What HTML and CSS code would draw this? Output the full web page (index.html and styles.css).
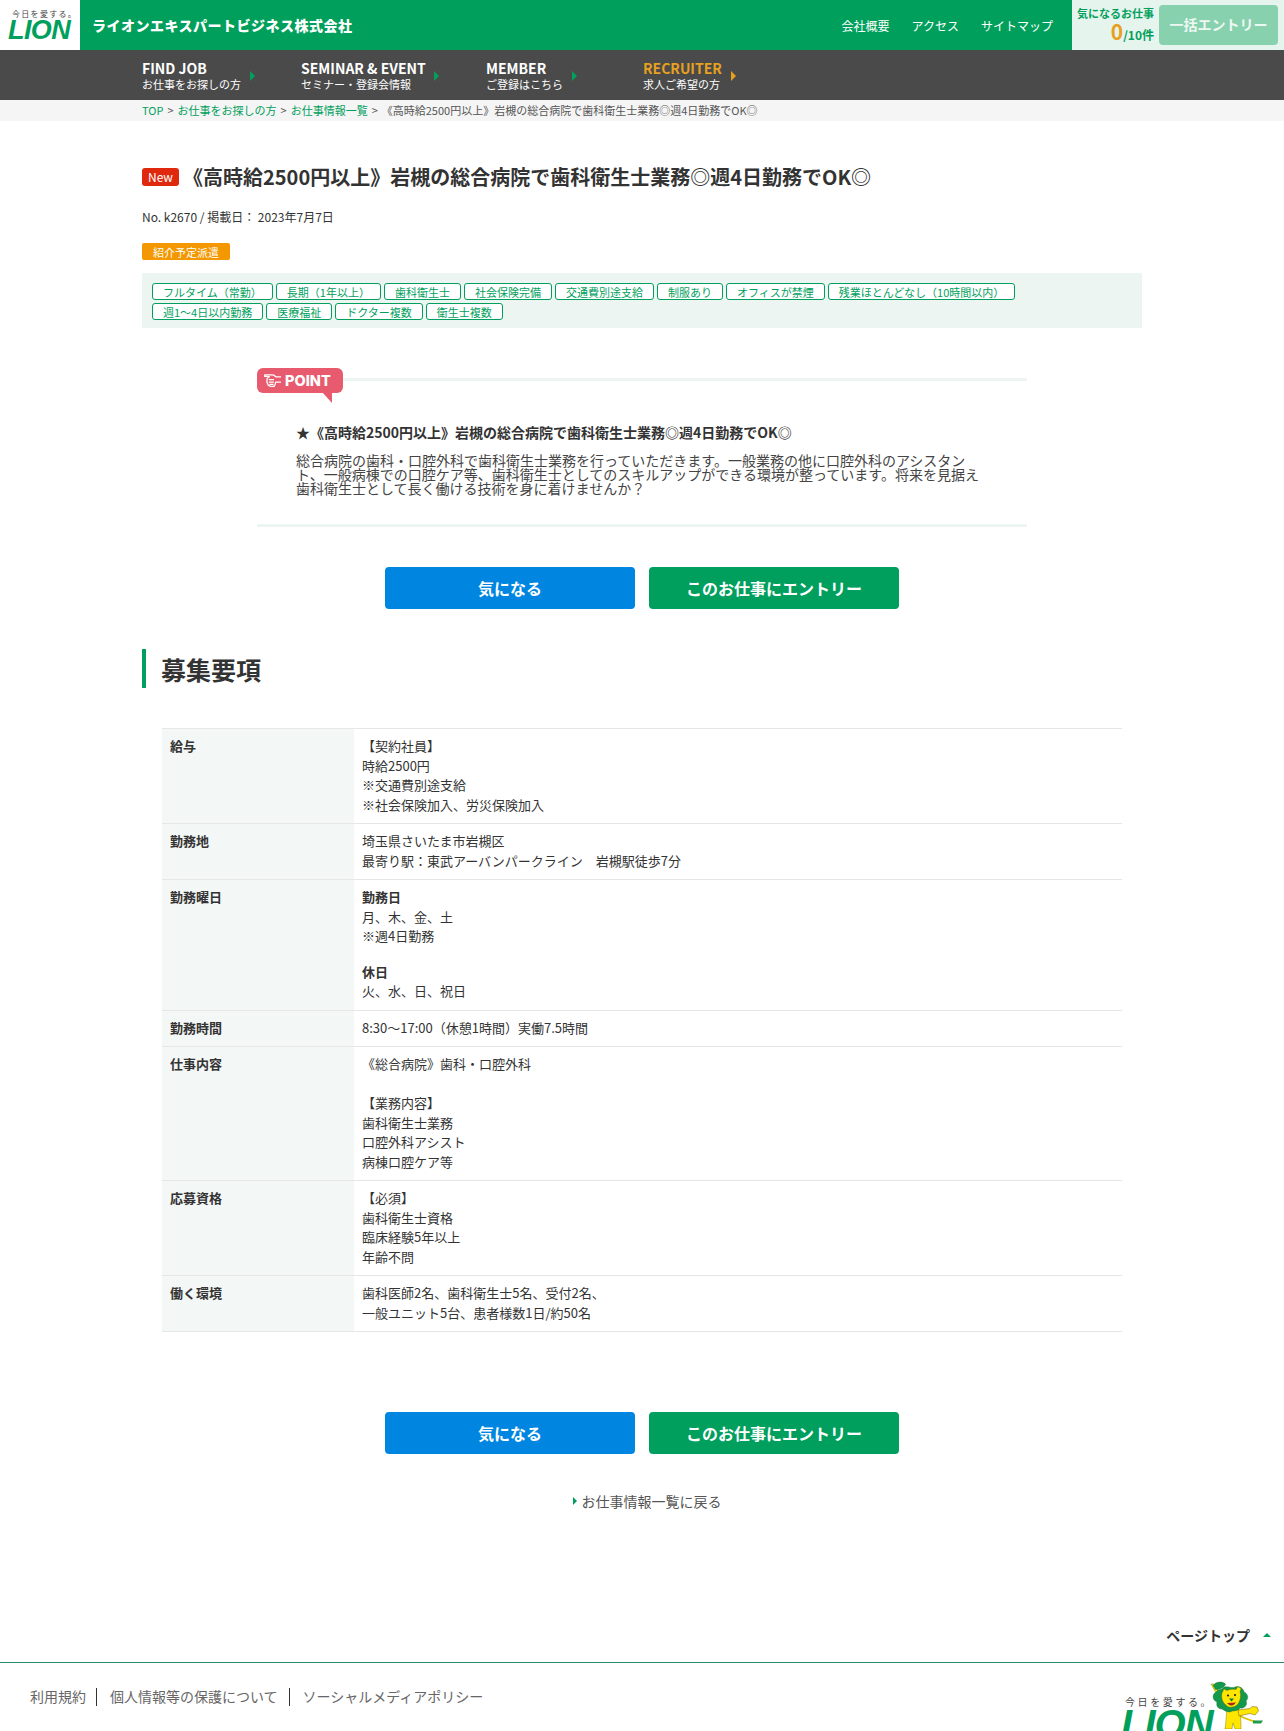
FILE: index.html
```html
<!DOCTYPE html>
<html lang="ja">
<head>
<meta charset="utf-8">
<title>お仕事情報</title>
<link rel="stylesheet" href="styles.css">
</head>
<body>
<header class="top">
  <a class="logo">
    <span class="logo-tag">今日を愛する。</span>
    <span class="logo-lion">LION</span>
  </a>
  <div class="company">ライオンエキスパートビジネス株式会社</div>
  <nav class="util">
    <a>会社概要</a><a>アクセス</a><a>サイトマップ</a>
  </nav>
  <div class="fav">
    <div class="fav-count">
      <div class="fav-label">気になるお仕事</div>
      <div class="fav-num"><span class="fav-zero">0</span>/10件</div>
    </div>
    <a class="fav-btn">一括エントリー</a>
  </div>
</header>
<nav class="gnav">
  <a class="gnav-item g1"><span class="gnav-text"><b>FIND JOB</b><small>お仕事をお探しの方</small></span><i class="arrow"></i></a>
  <a class="gnav-item g2"><span class="gnav-text"><b>SEMINAR &amp; EVENT</b><small>セミナー・登録会情報</small></span><i class="arrow"></i></a>
  <a class="gnav-item g3"><span class="gnav-text"><b>MEMBER</b><small>ご登録はこちら</small></span><i class="arrow"></i></a>
  <a class="gnav-item g4 recruiter"><span class="gnav-text"><b>RECRUITER</b><small>求人ご希望の方</small></span><i class="arrow"></i></a>
</nav>
<div class="crumb">
  <div class="crumb-in"><a>TOP</a><span>&gt;</span><a>お仕事をお探しの方</a><span>&gt;</span><a>お仕事情報一覧</a><span>&gt;</span><em>《高時給2500円以上》岩槻の総合病院で歯科衛生士業務◎週4日勤務でOK◎</em></div>
</div>
<main class="wrap">
  <div class="title-row">
    <span class="new">New</span>
    <h1>《高時給2500円以上》岩槻の総合病院で歯科衛生士業務◎週4日勤務でOK◎</h1>
  </div>
  <p class="meta">No. k2670 / 掲載日： 2023年7月7日</p>
  <div class="kind">紹介予定派遣</div>
  <ul class="tags">
    <li>フルタイム（常勤）</li><li>長期（1年以上）</li><li>歯科衛生士</li><li>社会保険完備</li><li>交通費別途支給</li><li>制服あり</li><li>オフィスが禁煙</li><li>残業ほとんどなし（10時間以内）</li><li>週1～4日以内勤務</li><li>医療福祉</li><li>ドクター複数</li><li>衛生士複数</li>
  </ul>
  <section class="point">
    <div class="point-head">
      <div class="point-badge">
        <svg class="hand" viewBox="0 0 16 12" width="17" height="13"><path d="M15.500 2.500H11L9.500 1 6.500.7 1 .7C.2.7.2 2.200 1 2.200L5 2.400 3 4 2.700 7.500 4 10.500 6 11.500H9.500L10.500 9.500 11 7.500H15.500" fill="none" stroke="#fff" stroke-width="1.200" stroke-linejoin="round" stroke-linecap="round"/><path d="M5 5.200H9M5 7.500H9M5.500 9.700H8.500" stroke="#fff" stroke-width="1.100" stroke-linecap="round"/></svg>
        <span>POINT</span>
      </div>
      <div class="point-line"></div>
    </div>
    <div class="point-body">
      <h2>★《高時給2500円以上》岩槻の総合病院で歯科衛生士業務◎週4日勤務でOK◎</h2>
      <p>総合病院の歯科・口腔外科で歯科衛生士業務を行っていただきます。一般業務の他に口腔外科のアシスタント、一般病棟での口腔ケア等、歯科衛生士としてのスキルアップができる環境が整っています。将来を見据え歯科衛生士として長く働ける技術を身に着けませんか？</p>
    </div>
    <div class="point-end"></div>
  </section>
  <div class="actions">
    <a class="btn btn-blue">気になる</a>
    <a class="btn btn-green">このお仕事にエントリー</a>
  </div>
  <h2 class="section-title">募集要項</h2>
  <table class="spec">
    <tr><th>給与</th><td>【契約社員】<br>時給2500円<br>※交通費別途支給<br>※社会保険加入、労災保険加入</td></tr>
    <tr><th>勤務地</th><td>埼玉県さいたま市岩槻区<br>最寄り駅：東武アーバンパークライン　岩槻駅徒歩7分</td></tr>
    <tr><th>勤務曜日</th><td><p class="days"><b>勤務日</b><br>月、木、金、土<br>※週4日勤務</p><p><b>休日</b><br>火、水、日、祝日</p></td></tr>
    <tr><th>勤務時間</th><td>8:30～17:00（休憩1時間）実働7.5時間</td></tr>
    <tr><th>仕事内容</th><td>《総合病院》歯科・口腔外科<br><br>【業務内容】<br>歯科衛生士業務<br>口腔外科アシスト<br>病棟口腔ケア等</td></tr>
    <tr><th>応募資格</th><td>【必須】<br>歯科衛生士資格<br>臨床経験5年以上<br>年齢不問</td></tr>
    <tr><th>働く環境</th><td>歯科医師2名、歯科衛生士5名、受付2名、<br>一般ユニット5台、患者様数1日/約50名</td></tr>
  </table>
  <div class="actions actions-bottom">
    <a class="btn btn-blue">気になる</a>
    <a class="btn btn-green">このお仕事にエントリー</a>
  </div>
  <a class="back"><i class="back-arrow"></i>お仕事情報一覧に戻る</a>
</main>
<div class="pagetop"><a>ページトップ</a><i class="up"></i></div>
<footer class="foot">
  <ul class="foot-links">
    <li>利用規約</li><li>個人情報等の保護について</li><li>ソーシャルメディアポリシー</li>
  </ul>
  <div class="foot-logo">
    <div class="foot-brand">
      <span class="foot-tag">今日を愛する。</span>
      <span class="foot-lion">LION</span>
    </div>
    <svg class="lion" viewBox="0 0 56 48" width="56" height="48">
      <path d="M30 34C38 38 44 41 51 41" fill="none" stroke="#d8c400" stroke-width="1.800"/>
      <path d="M45 39.500L55 39.500 53 42.500 45 42.500Z" fill="#1f9a50"/>
      <path d="M3 3L8 12 11 11 6 3Z" fill="#ffe600" stroke="#6a5a00" stroke-width=".4"/>
      <path d="M19 28C18 36 18 43 17 48H24L25 42 27 48H33C33 42 33 34 31 28Z" fill="#ffe600" stroke="#6a5a00" stroke-width=".4"/>
      <path d="M30 29L42 27.500 44 25.500 49 26 50.500 30 47 34 42 32.500 31 35Z" fill="#ffe600" stroke="#6a5a00" stroke-width=".5"/>
      <path d="M5 4.500C8 .5 14 0 17.500 3 17 6 12 9 7.500 8.500Z" fill="#12994c" stroke="#0a6a30" stroke-width=".4"/>
      <path d="M8 11C10 8 14 9 15 7 18 4 24 8 27 6 31 4 36 8 36 11 40 13 41 17 38 20 40 24 36 28 32 27 29 31 25 29 22 31 18 31 16 29 14 28 10 28 8 25 9 21 4 19 4 13 8 11Z" fill="#12994c" stroke="#0a6a30" stroke-width=".4"/>
      <path d="M14 12L16 8 19 9.500C22 8 26 8 28 8.500L30 5.500 33 7.500 32 11C33.500 15 32 21 29 24 25 27 20 27 18 24 14 21 13 16 14 12Z" fill="#ffe600" stroke="#6a5a00" stroke-width=".4"/>
      <circle cx="20" cy="14.500" r="1.100" fill="#222"/><circle cx="27" cy="14" r="1.100" fill="#222"/>
      <path d="M21 17.500H26L23.500 20.500Z" fill="#0a7a38"/>
      <path d="M19.500 22C21.500 25 25.500 25 27.500 21.500" fill="#b22" stroke="#222" stroke-width=".5"/>
    </svg>
  </div>
</footer>
</body>
</html>
```

FILE: styles.css
```css
* { box-sizing: border-box; }
html, body { margin: 0; padding: 0; }
body {
  font-family: "Noto Sans CJK JP", "Noto Sans", sans-serif;
  color: #333;
  font-size: 13px;
  background: #fff;
}
ul { list-style: none; margin: 0; padding: 0; }
p, h1, h2 { margin: 0; }

.top {
  display: flex;
  align-items: center;
  height: 50px;
  background: #00a05c;
}
.logo {
  width: 80px;
  height: 50px;
  background: #fff;
  display: flex;
  flex-direction: column;
  align-items: flex-start;
  padding: 9px 0 0 8px;
}
.logo-tag {
  font-size: 8px;
  line-height: 10px;
  letter-spacing: 1.300px;
  color: #444;
  padding-left: 4px;
  white-space: nowrap;
}
.logo-lion {
  font-family: "Liberation Sans", sans-serif;
  font-weight: 700;
  font-style: italic;
  font-size: 27px;
  line-height: 23px;
  letter-spacing: -.6px;
  color: #00a05c;
}
.company {
  margin-left: 12px;
  color: #fff;
  font-size: 14px;
  font-weight: 900;
  letter-spacing: .5px;
  white-space: nowrap;
}
.util {
  margin-left: auto;
  display: flex;
  gap: 22px;
  padding-right: 19px;
  font-size: 12px;
  color: #fff;
  padding-top: 1px;
}
.fav {
  width: 212px;
  height: 50px;
  background: #e6f4ee;
  display: flex;
  align-items: center;
  padding-left: 5px;
  gap: 5px;
}
.fav-count { width: 77px; text-align: right; padding-bottom: 3px; }
.fav-label {
  font-size: 11px;
  line-height: 14px;
  font-weight: 700;
  color: #00a05c;
  white-space: nowrap;
}
.fav-num {
  font-size: 12px;
  line-height: 22px;
  height: 22px;
  font-weight: 700;
  color: #00a05c;
}
.fav-zero { font-size: 21px; color: #e8a020; }
.fav-btn {
  width: 119px;
  height: 40px;
  border-radius: 4px;
  background: #88d1ae;
  color: #eef8f3;
  font-size: 14px;
  font-weight: 700;
  line-height: 38px;
  text-align: center;
}

.gnav {
  height: 50px;
  background: #4a4a4a;
  padding-left: 142px;
  display: flex;
  color: #fff;
}
.gnav-item { display: flex; align-items: center; padding-top: 2px; }
.g1 { width: 159px; }
.g2 { width: 185px; }
.g3 { width: 157px; }
.gnav-text { display: flex; flex-direction: column; white-space: nowrap; }
.gnav-text b { font-size: 14px; line-height: 17px; font-weight: 700; }
.gnav-text small { font-size: 11px; line-height: 15px; }
.arrow {
  margin-left: 9px;
  width: 0;
  height: 0;
  border-left: 5px solid #00a05c;
  border-top: 5px solid transparent;
  border-bottom: 5px solid transparent;
}
.g2 .arrow { margin-left: 8px; }
.g3 .arrow { margin-left: 9px; }
.recruiter b { color: #e8a020; }
.recruiter .arrow { border-left-color: #e8a020; margin-left: 9px; }

.crumb { height: 21px; background: #f5f5f5; }
.crumb-in {
  margin-left: 142px;
  font-size: 11px;
  line-height: 21px;
  color: #00a05c;
  white-space: nowrap;
}
.crumb-in span { color: #555; margin: 0 4px; }
.crumb-in em { font-style: normal; color: #555; }

.wrap { width: 1000px; margin: 0 auto; display: block; }
.title-row {
  display: flex;
  align-items: center;
  height: 30px;
  margin-top: 41px;
}
.new {
  width: 37px;
  height: 18px;
  border-radius: 3px;
  background: #e0280e;
  color: #fff;
  font-size: 12px;
  line-height: 18px;
  text-align: center;
  margin-right: 4px;
}
h1 { font-size: 20px; line-height: 30px; font-weight: 700; white-space: nowrap; }
.meta { margin-top: 15px; font-size: 12px; line-height: 20px; }
.kind {
  margin-top: 16px;
  width: 88px;
  height: 17px;
  border-radius: 2px;
  background: #f39800;
  color: #fff;
  font-size: 11px;
  line-height: 18px;
  text-align: center;
}
.tags {
  margin-top: 13px;
  height: 55px;
  background: #edf5f2;
  padding: 10px 20px 8px 10px;
  display: flex;
  flex-wrap: wrap;
  align-content: flex-start;
  gap: 3px;
}
.tags li {
  height: 17px;
  padding: 0 10px;
  border: 1px solid #009f5d;
  border-radius: 3px;
  background: #fff;
  color: #009f5d;
  font-size: 11px;
  line-height: 16px;
  white-space: nowrap;
}

.point { width: 770px; margin: 40px auto 0; }
.point-head { display: flex; align-items: flex-start; }
.point-badge {
  position: relative;
  width: 86px;
  height: 25px;
  border-radius: 6px;
  background: #e85a6e;
  color: #fff;
  display: flex;
  align-items: center;
  padding-left: 7px;
  gap: 4px;
  font-family: "Inter", sans-serif;
  font-weight: 800;
  font-size: 14.500px;
}
.point-badge::after {
  content: "";
  position: absolute;
  left: 65px;
  top: 24px;
  border-top: 11px solid #e85a6e;
  border-left: 10px solid transparent;
}
.point-line { flex: 1; height: 3px; margin-top: 10px; background: #edf5f2; }
.point-body { padding: 29px 39px 0; }
.point-body h2 { font-size: 14px; line-height: 20px; font-weight: 700; }
.point-body p { margin-top: 11px; font-size: 14px; line-height: 14px; color: #444; }
.point-end { height: 3px; margin-top: 29px; background: #edf5f2; }

.actions { display: flex; justify-content: center; gap: 14px; margin-top: 40px; }
.actions-bottom { margin-top: 80px; }
.btn {
  width: 250px;
  height: 42px;
  border-radius: 4px;
  color: #fff;
  font-size: 16px;
  font-weight: 700;
  line-height: 42px;
  text-align: center;
}
.btn-blue { background: #0086e0; }
.btn-green { background: #009f5d; }

.section-title {
  margin-top: 40px;
  height: 39px;
  border-left: 4px solid #009f5d;
  padding-left: 15px;
  font-size: 25px;
  line-height: 41px;
  font-weight: 700;
}
.spec {
  width: 960px;
  margin: 40px 20px 0;
  border-collapse: collapse;
  font-size: 13px;
  line-height: 19.5px;
}
.spec tr { border-top: 1px solid #e6e6e6; border-bottom: 1px solid #e6e6e6; }
.spec th {
  width: 192px;
  background: #f3f7f6;
  padding: 7px 8px 9px;
  text-align: left;
  vertical-align: top;
  font-weight: 700;
}
.spec td { padding: 7px 8px 9px; vertical-align: top; }
.spec p { margin: 0; }
.spec .days { margin-bottom: 16px; }

.back {
  display: flex;
  align-items: center;
  justify-content: center;
  margin-top: 37px;
  padding-left: 10px;
  font-size: 14px;
  line-height: 20px;
  color: #555;
}
.back-arrow {
  width: 0;
  height: 0;
  margin-right: 5px;
  border-left: 4px solid #009f5d;
  border-top: 4px solid transparent;
  border-bottom: 4px solid transparent;
}

.pagetop {
  display: flex;
  justify-content: flex-end;
  align-items: center;
  margin-top: 114px;
  height: 20px;
  margin-bottom: 17px;
  padding-right: 13px;
  font-size: 14px;
  font-weight: 700;
  line-height: 20px;
}
.up {
  margin-left: 13px;
  width: 0;
  height: 0;
  border-bottom: 4px solid #009f5d;
  border-left: 4px solid transparent;
  border-right: 4px solid transparent;
}

.foot {
  height: 69px;
  overflow: hidden;
  border-top: 1px solid #2a8a68;
  display: flex;
  justify-content: space-between;
  align-items: flex-start;
  padding: 20px 20px 0 30px;
}
.foot-links { display: flex; margin-top: 5px; font-size: 14px; color: #666; }
.foot-links li { padding: 0 11px 2px 13px; line-height: 16px; border-left: 1px solid #333; white-space: nowrap; }
.foot-links li:first-child { padding-left: 0; border-left: 0; padding-right: 10px; }
.foot-logo { display: flex; align-items: flex-start; }
.foot-brand { display: flex; flex-direction: column; align-items: flex-start; padding-top: 13px; width: 87px; }
.foot-tag {
  font-size: 10px;
  line-height: 12px;
  letter-spacing: 2.600px;
  color: #444;
  padding-left: 4px;
  white-space: nowrap;
}
.foot-lion {
  font-family: "Liberation Sans", sans-serif;
  font-weight: 700;
  font-style: italic;
  font-size: 40px;
  line-height: 32px;
  letter-spacing: -1px;
  color: #00a05c;
}
.lion { display: block; flex: none; margin-top: -2px; }
```
